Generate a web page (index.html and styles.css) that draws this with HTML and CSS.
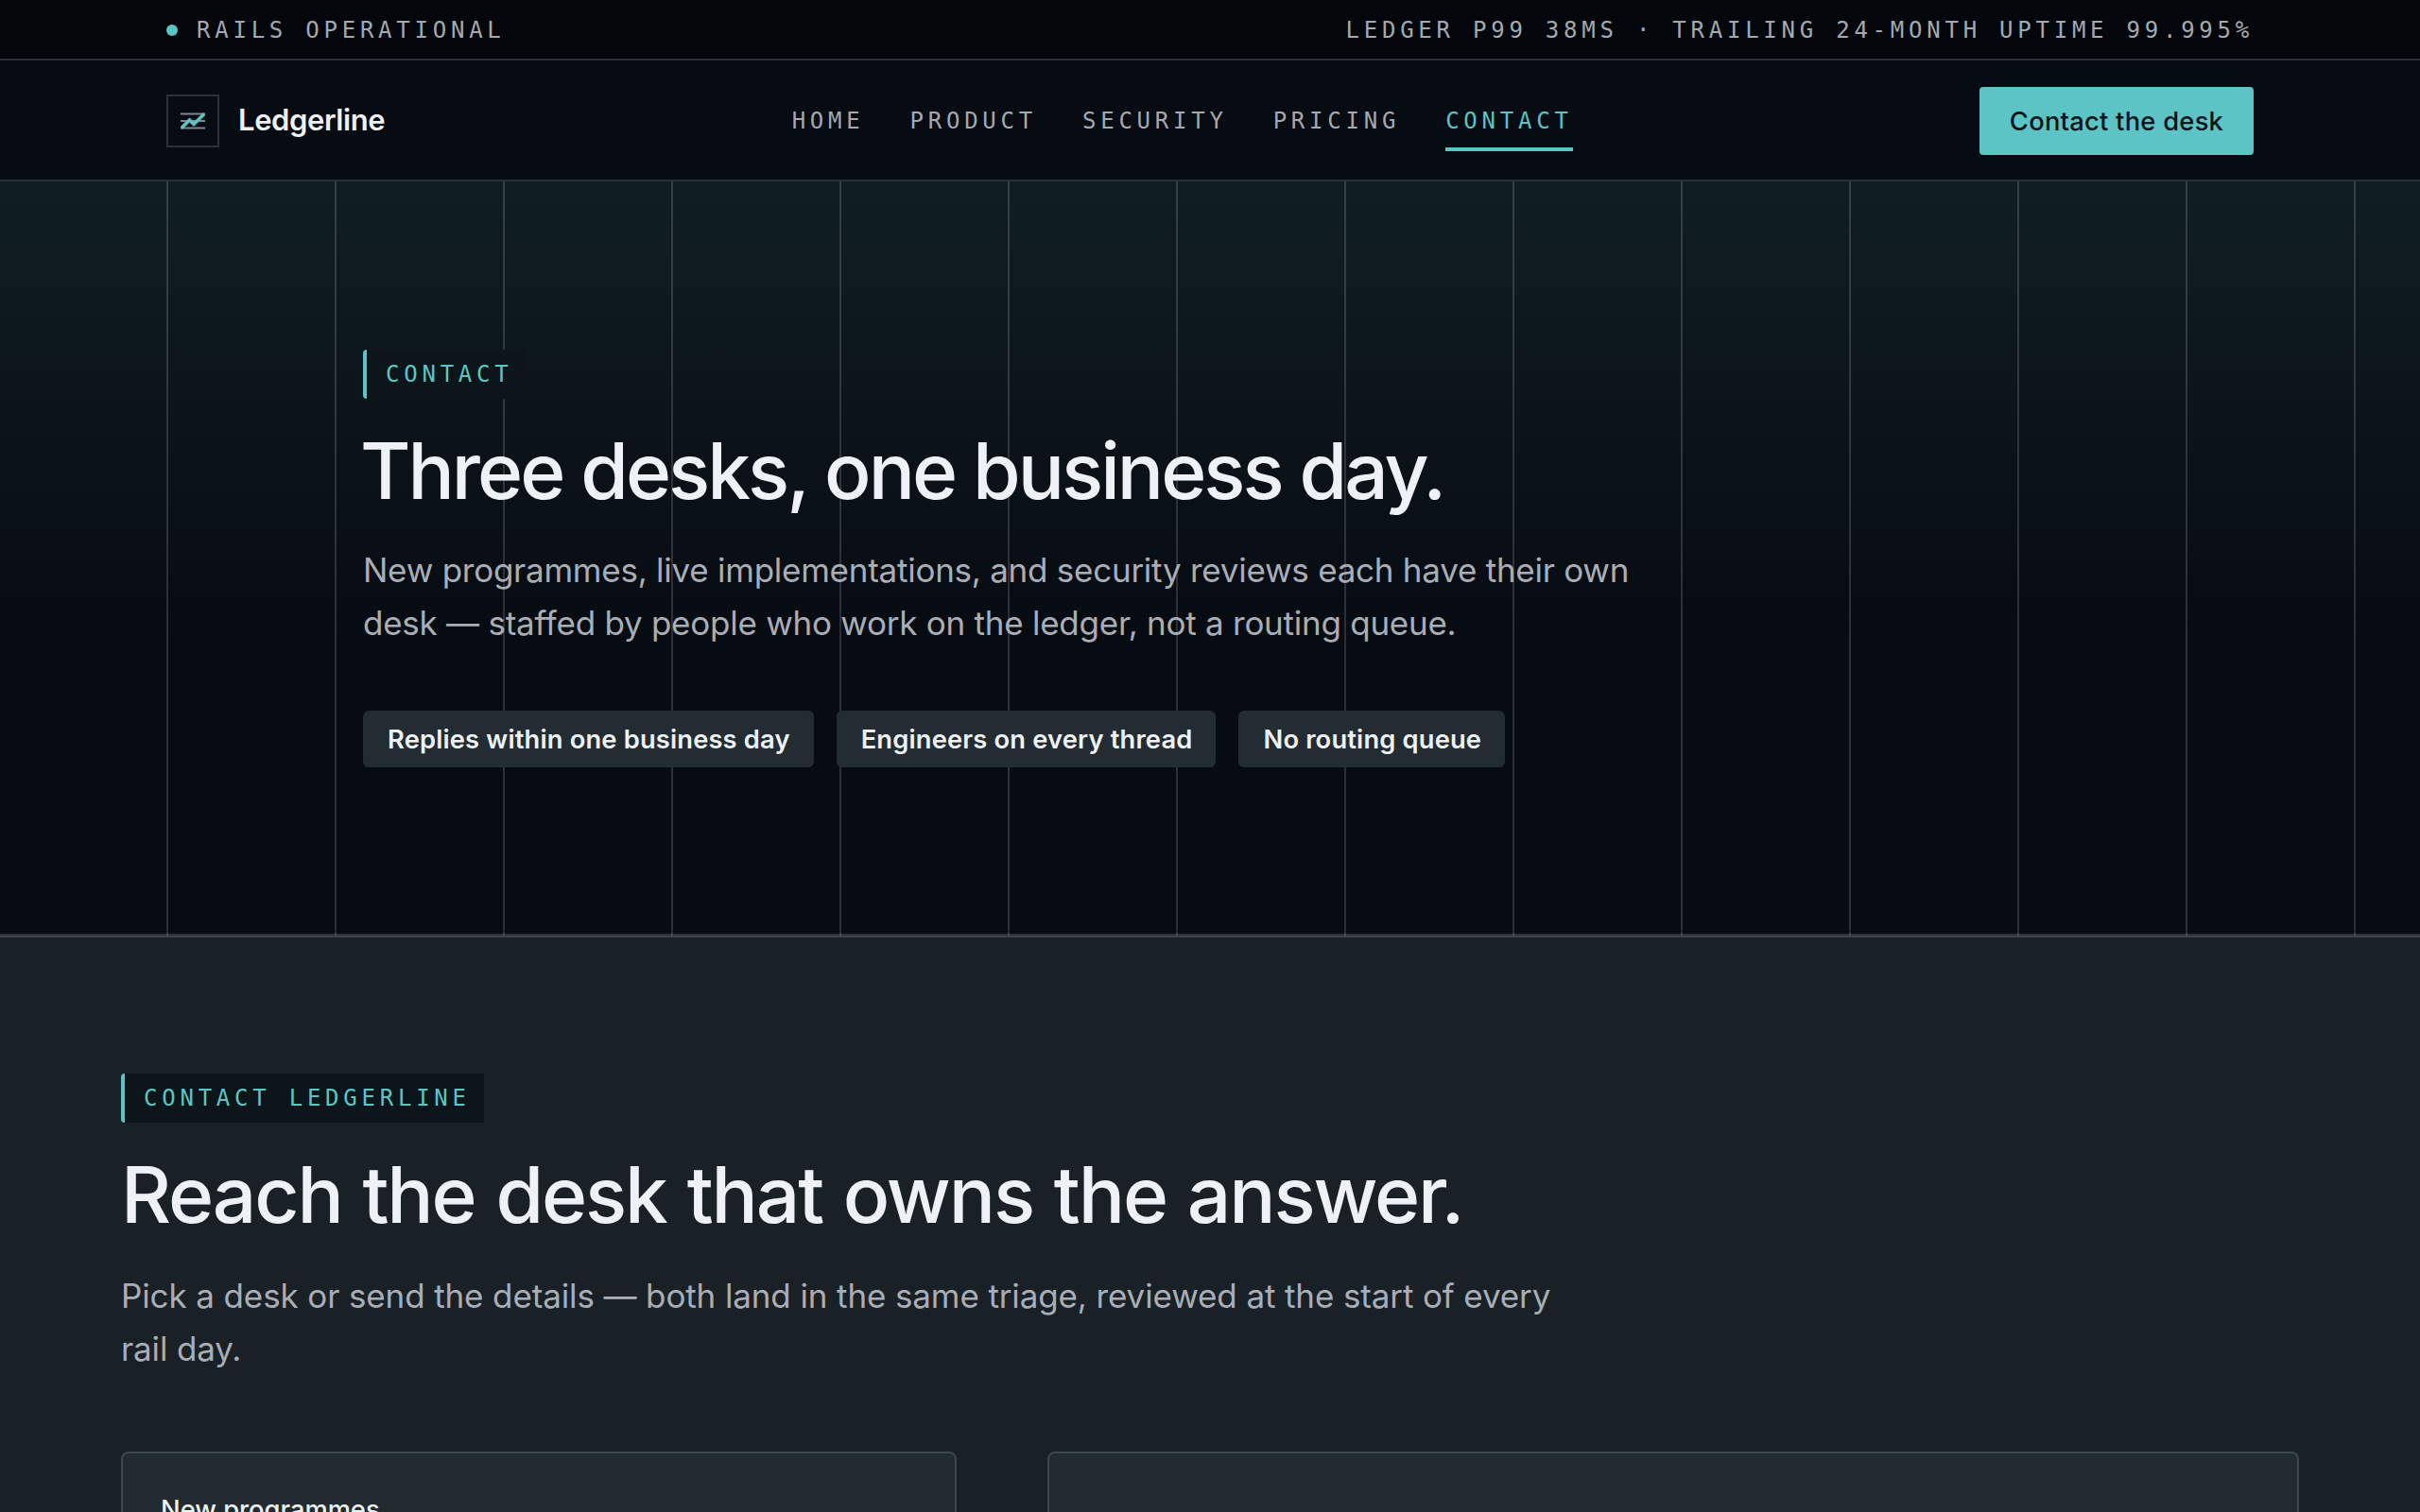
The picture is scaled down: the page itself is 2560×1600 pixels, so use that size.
FILE: index.html
```html
<!DOCTYPE html>
<html lang="en">
<head>
<meta charset="UTF-8">
<meta name="viewport" content="width=device-width, initial-scale=1.0">
<title>Contact | Ledgerline</title>
<link rel="stylesheet" href="styles.css">
</head>
<body>
<div class="status-bar">
    <div class="status-left"><span class="dot"></span><span>RAILS OPERATIONAL</span></div>
    <div class="status-right">LEDGER P99 38MS · TRAILING 24-MONTH UPTIME 99.995%</div>
</div>

<header class="header">
    <a class="brand" href="#">
        <span class="brand-mark">
            <svg width="28" height="20" viewBox="0 0 28 20" fill="none">
                <path d="M1 2.5H27M1 10H27M1 17.5H27" stroke="#7f868c" stroke-width="2"/>
                <path d="M2 17.5L10.5 9L15 13.5L26 2.5" stroke="#5cc4c4" stroke-width="3.6"/>
            </svg>
        </span>
        <span class="brand-name">Ledgerline</span>
    </a>
    <nav class="nav">
        <a href="#">HOME</a>
        <a href="#">PRODUCT</a>
        <a href="#">SECURITY</a>
        <a href="#">PRICING</a>
        <a class="active" href="#">CONTACT</a>
    </nav>
    <a class="button" href="#">Contact the desk</a>
</header>

<section class="hero">
    <span class="eyebrow">CONTACT</span>
    <h1>Three desks, one business day.</h1>
    <p class="lede">New programmes, live implementations, and security reviews each have their own<br>desk — staffed by people who work on the ledger, not a routing queue.</p>
    <div class="chips">
        <span class="chip">Replies within one business day</span>
        <span class="chip">Engineers on every thread</span>
        <span class="chip">No routing queue</span>
    </div>
</section>

<section class="contact">
    <span class="eyebrow">CONTACT LEDGERLINE</span>
    <h2>Reach the desk that owns the answer.</h2>
    <p class="lede">Pick a desk or send the details — both land in the same triage, reviewed at the start of every<br>rail day.</p>
    <div class="cards">
        <div class="card"><h3>New programmes</h3></div>
        <div class="card"></div>
    </div>
</section>
</body>
</html>
```
FILE: styles.css
```css
* {
    box-sizing: border-box;
}

body {
    margin: 0;
    height: 100vh;
    overflow: hidden;
    font-family: Inter, "Liberation Sans", sans-serif;
    background-color: #192127;
    color: #eef2f6;
}

a {
    color: inherit;
    text-decoration: none;
}

h1, h2, h3, p {
    margin: 0;
}

.status-bar {
    display: flex;
    justify-content: space-between;
    align-items: center;
    height: 64px;
    padding: 2px 176px 0;
    background-color: #03070b;
    border-bottom: 2px solid #2b2f35;
}

.status-bar, .nav, .eyebrow {
    font-family: "DejaVu Sans Mono", monospace;
    font-size: 24px;
    letter-spacing: 4.76px;
    white-space: nowrap;
}

.status-bar, .nav {
    color: #a4a9af;
}

.status-left {
    display: flex;
    align-items: center;
    gap: 20px;
}

.dot {
    width: 12px;
    height: 12px;
    border-radius: 50%;
    background-color: #5cc4c4;
}

.header {
    display: flex;
    justify-content: space-between;
    align-items: center;
    height: 128px;
    padding: 2px 176px 0;
    background-color: #070b12;
    border-bottom: 2px solid #2b2f35;
}

.brand {
    display: flex;
    align-items: center;
    gap: 20px;
}

.brand-mark {
    display: flex;
    align-items: center;
    justify-content: center;
    width: 56px;
    height: 56px;
    border: 2px solid #2e3238;
}

.brand-name {
    padding-bottom: 4px;
    font-size: 31px;
    font-weight: 600;
    letter-spacing: -0.4px;
}

.nav {
    display: flex;
    gap: 48px;
}

.nav a {
    height: 64px;
    line-height: 64px;
    border-bottom: 4px solid transparent;
}

.nav .active {
    color: #5cc4c4;
    border-bottom-color: #5cc4c4;
}

.button {
    width: 290px;
    height: 72px;
    line-height: 73px;
    text-align: center;
    font-size: 27.3px;
    font-weight: 500;
    letter-spacing: 0.26px;
    border-radius: 4px;
    background-color: #5cc4c4;
    color: #07151a;
}

.hero {
    height: 798px;
    padding: 178px 384px 0;
    background:
        repeating-linear-gradient(90deg, transparent 0 176px, rgba(255, 255, 255, 0.15) 176px 178px),
        linear-gradient(180deg, #101e23 0%, #070b12 60%);
    background-origin: border-box;
    border-bottom: 2px solid rgba(255, 255, 255, 0.15);
}

.eyebrow {
    display: block;
    width: fit-content;
    height: 52px;
    padding: 0 14px 0 20px;
    line-height: 53px;
    border-left: 4px solid #5cc4c4;
    border-radius: 4px 0 0 4px;
    background-color: #0c151a;
    color: #5cc4c4;
}

h1, h2 {
    margin-top: 33px;
    line-height: 88px;
    font-size: 82px;
    font-weight: 500;
    white-space: nowrap;
}

h1 {
    margin-left: -3px;
    letter-spacing: -3px;
}

h2 {
    letter-spacing: -2.1px;
    word-spacing: 2px;
}

.lede {
    margin-top: 32px;
    font-size: 35px;
    line-height: 56px;
    letter-spacing: -0.25px;
    color: #a9aeb6;
}

.chips {
    display: flex;
    gap: 24px;
    margin-top: 65px;
}

.chip {
    height: 60px;
    padding: 0 25px 0 26px;
    line-height: 61px;
    font-size: 27.3px;
    font-weight: 600;
    letter-spacing: 0.17px;
    border-radius: 6px;
    background-color: #222c32;
}

.contact {
    padding: 144px 128px 0;
    border-top: 2px solid #3c454a;
}

.contact .lede {
    margin-top: 34px;
    letter-spacing: -0.12px;
}

.cards {
    display: grid;
    grid-template-columns: 884px 1fr;
    gap: 96px;
    margin-top: 81px;
}

.card {
    min-height: 400px;
    padding: 40px;
    border: 2px solid #3c484c;
    border-radius: 8px;
    background-color: #212b30;
}

.card h3 {
    font-size: 27.3px;
    font-weight: 500;
    line-height: 40px;
}
```
